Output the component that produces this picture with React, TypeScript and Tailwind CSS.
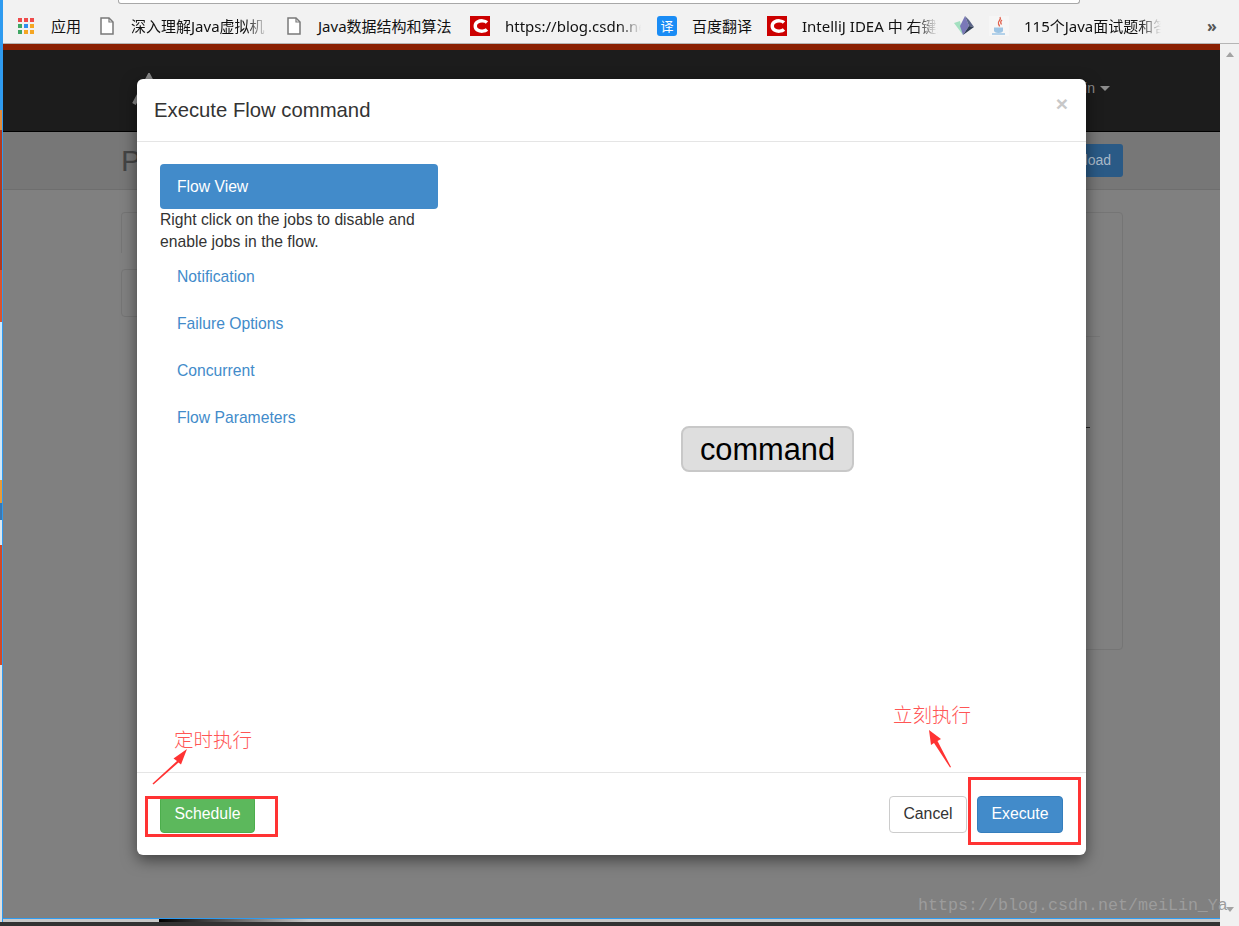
import type { ReactNode } from 'react';

const fadeText = 'overflow-hidden whitespace-nowrap [mask-image:linear-gradient(to_right,black_84%,transparent)]';

function PageIcon() {
  return (
    <svg width="14" height="18" viewBox="0 0 14 18" fill="none">
      <path d="M1 1h8l4 4v12H1z" fill="#fff" stroke="#7a7a7a" strokeWidth="1.5" />
      <path d="M9 1v4h4" stroke="#7a7a7a" strokeWidth="1.2" />
    </svg>
  );
}

function AppsIcon() {
  const colors = ['#ef4b4b', '#ef4b4b', '#ef4b4b', '#3fa764', '#2f8fef', '#f5a623', '#3fa764', '#f5a623', '#f5a623'];
  return (
    <div className="grid grid-cols-3 gap-[2px]">
      {colors.map((c, i) => (
        <div key={i} className="w-[4px] h-[4px]" style={{ backgroundColor: c }} />
      ))}
    </div>
  );
}

function CsdnIcon() {
  return (
    <svg width="20" height="20" viewBox="0 0 20 20">
      <rect width="20" height="20" fill="#cc0000" />
      <path d="M17 6.500C15 4.500 10.500 4.200 7.500 6c-3 1.800-3 6.200 0 8 3 1.800 7.500 1.500 9.500-.5" fill="none" stroke="#fff" strokeWidth="3.400" />
    </svg>
  );
}

function TranslateIcon() {
  return (
    <div className="w-[20px] h-[20px] rounded-[3px] bg-[#1a8cf5] flex items-center justify-center text-white text-[13px] leading-none">
      译
    </div>
  );
}

function PrismIcon() {
  return (
    <svg width="20" height="20" viewBox="0 0 20 20">
      <polygon points="0,7 6,5 9,19" fill="#a3e0c0" />
      <polygon points="11,0 6,10 9,19 15,10" fill="#7a78b8" />
      <polygon points="11,0 15,10 20,11 15,4" fill="#5a6488" />
      <polygon points="9,19 15,10 20,11" fill="#2f3d55" />
    </svg>
  );
}

function JavaIcon() {
  return (
    <svg width="20" height="20" viewBox="0 0 20 20">
      <rect width="20" height="20" fill="#f6f6f6" />
      <path d="M11 1c2 3-3 4-1.500 7 .4 1 1 1.500 1 2.500M13 4c-2 1.500-1.500 3-.5 4.500" fill="none" stroke="#e0604c" strokeWidth="1.300" />
      <path d="M5 11.500h9v3c0 1.500-1.500 2.500-4.500 2.500S5 16 5 14.500z" fill="#9cc4e4" />
      <path d="M3 18h13" stroke="#9cc4e4" strokeWidth="1.500" />
    </svg>
  );
}

function Bookmark({ icon, children, textClass }: { icon: ReactNode; children?: string; textClass?: string }) {
  return (
    <div className="flex items-center gap-[15px]">
      <div className="w-[20px] h-[20px] flex items-center justify-center">{icon}</div>
      {children && <div className={textClass}>{children}</div>}
    </div>
  );
}

function BookmarkBar() {
  return (
    <div className="h-[44px] bg-[#f2f2f2] border-b border-[#b5b5b5] relative">
      <div className="absolute top-0 left-[115px] w-[962px] h-[4px] bg-white border-x border-b border-[#a8a8a8] rounded-b-[3px]" />
      <div className="h-full flex items-center gap-[16px] pl-[13px] pt-[9px] text-[15px] text-[#111] font-['Noto_Sans','Noto_Sans_CJK_SC',sans-serif]">
        <Bookmark icon={<AppsIcon />} textClass="w-[30px] whitespace-nowrap">应用</Bookmark>
        <Bookmark icon={<PageIcon />} textClass={`-ml-[1px] w-[137px] ${fadeText}`}>深入理解Java虚拟机</Bookmark>
        <Bookmark icon={<PageIcon />} textClass="-ml-[1px] w-[136px] whitespace-nowrap">Java数据结构和算法</Bookmark>
        <Bookmark icon={<CsdnIcon />} textClass={`w-[136px] ${fadeText}`}>https://blog.csdn.net/</Bookmark>
        <Bookmark icon={<TranslateIcon />} textClass="w-[59px] whitespace-nowrap">百度翻译</Bookmark>
        <Bookmark icon={<CsdnIcon />} textClass={`w-[136px] ${fadeText}`}>IntelliJ IDEA 中 右键菜单</Bookmark>
        <div className="-mr-[1px]">
          <Bookmark icon={<PrismIcon />} />
        </div>
        <Bookmark icon={<JavaIcon />} textClass={`w-[137px] ${fadeText}`}>115个Java面试题和答案</Bookmark>
        <div className="ml-[30px] text-[#555] text-[16px] leading-none font-bold">»</div>
      </div>
    </div>
  );
}

function DesktopStrip() {
  return (
    <div className="w-[3px] h-full flex flex-col border-r border-[#2f9bf0]">
      <div className="h-[110px] bg-[#2f9bf0]" />
      <div className="h-[20px] bg-[#e08a3c]" />
      <div className="h-[140px] bg-[#b03a20]" />
      <div className="h-[52px] bg-[#d8552f]" />
      <div className="h-[158px] bg-[#cfe6f7]" />
      <div className="h-[23px] bg-[#e69a3a]" />
      <div className="h-[17px] bg-[#3c78b0]" />
      <div className="h-[25px] bg-[#dbe6ee]" />
      <div className="h-[120px] bg-[#d04a28]" />
      <div className="flex-1 bg-[#e0e0e0]" />
    </div>
  );
}

function DimmedPage() {
  return (
    <div className="flex-1 flex flex-col bg-[#808080]">
      <div className="h-[6px] bg-[#8a2003]" />
      <div className="h-[82px] bg-[#1c1c1c] border-b border-black flex items-center justify-between pl-[129px] pr-[110px]">
        <svg width="34" height="34" viewBox="0 0 34 34" fill="none" className="-mt-[2px]">
          <path d="M2 31 17 3l15 28" stroke="#8a8a8a" strokeWidth="4" />
        </svg>
        <div className="flex items-center gap-[5px] text-[14px] text-[#8c8c8c] -mt-[4px]">
          <span>Admin</span>
          <span className="w-0 h-0 border-x-[5px] border-x-transparent border-t-[5px] border-t-[#8c8c8c]" />
        </div>
      </div>
      <div className="h-[58px] bg-[#777777] border-b border-[#6e6e6e] flex items-center justify-between pl-[118px] pr-[97px]">
        <div className="text-[30px] text-[#444]">Project</div>
        <div className="h-[33px] px-[12px] flex items-center rounded-[3px] bg-[#2a5a86] text-[14px] text-[#a9b9c8]">Upload</div>
      </div>
      <div className="flex pl-[118px] pr-[97px] pt-[22px]">
        <div className="w-[320px] flex flex-col">
          <div className="h-[41px] border border-b-0 border-[#757575] rounded-t-[4px]" />
          <div className="h-[48px] mt-[16px] border border-[#757575] rounded-[4px]" />
        </div>
        <div className="flex-1 h-[438px] border border-[#757575] rounded-[4px] flex flex-col items-end">
          <div className="w-[120px] h-px mt-[123px] mr-[22px] bg-[#777]" />
          <div className="w-[36px] h-[10px] mt-[25px] bg-[#2a5a86] mr-[36px] rounded-r-full" />
          <div className="w-[40px] h-px mt-[55px] bg-[#222] mr-[32px]" />
        </div>
      </div>
    </div>
  );
}

const tabs = ['Notification', 'Failure Options', 'Concurrent', 'Flow Parameters'];

function ExecuteModal() {
  return (
    <div className="absolute left-[137px] top-[79px] w-[949px] h-[776px] bg-white rounded-[6px] shadow-[0_5px_15px_rgba(0,0,0,0.5)] flex flex-col">
      <div className="h-[63px] shrink-0 border-b border-[#e5e5e5] flex items-start justify-between pl-[17px] pr-[18px]">
        <div className="text-[20.3px] leading-[22px] mt-[20px] text-[#333]">Execute Flow command</div>
        <div className="text-[21px] leading-[21px] mt-[14px] font-bold text-[#c8c8c8]">×</div>
      </div>

      <div className="flex-1 flex pl-[23px] pr-[23px] pt-[22px]">
        <div className="w-[278px] shrink-0 text-[15.7px] leading-[22px]">
          <div className="h-[45px] rounded-[4px] bg-[#428bca] text-white flex items-center px-[17px]">Flow View</div>
          <p className="text-[#333]">Right click on the jobs to disable and enable jobs in the flow.</p>
          <div className="flex flex-col gap-[2px]">
            {tabs.map((t) => (
              <div key={t} className="h-[45px] pt-[2px] flex items-center px-[17px] text-[#428bca]">{t}</div>
            ))}
          </div>
        </div>
        <div className="flex-1 relative">
          {/* flow graph canvas */}
          <div className="absolute left-[243px] top-[262px] w-[173px] h-[46px] pt-[2px] rounded-[8px] bg-[#dedede] border-2 border-[#c8c8c8] flex items-center justify-center text-[30.8px] text-black">
            command
          </div>
        </div>
      </div>

      <div className="h-[83px] shrink-0 border-t border-[#e5e5e5] flex items-center justify-between px-[23px] text-[15.8px]">
        <div className="h-[37px] w-[95px] rounded-[4px] bg-[#5cb85c] border border-[#4cae4c] text-white flex items-center justify-center">Schedule</div>
        <div className="flex gap-[10px]">
          <div className="h-[37px] w-[78px] rounded-[4px] bg-white border border-[#ccc] text-[#333] flex items-center justify-center">Cancel</div>
          <div className="h-[37px] w-[86px] rounded-[4px] bg-[#428bca] border border-[#357ebd] text-white flex items-center justify-center">Execute</div>
        </div>
      </div>
    </div>
  );
}

function Annotations() {
  return (
    <>
      <div className="absolute left-[145px] top-[796px] w-[133px] h-[41px] border-[3px] border-[#ff3333]" />
      <div className="absolute left-[968px] top-[777px] w-[113px] h-[68px] border-[3px] border-[#ff3333]" />
      <div className="absolute left-[174px] top-[725px] text-[19.5px] leading-[28px] text-[#ff5555] font-['Noto_Sans_CJK_SC',sans-serif] font-light">定时执行</div>
      <div className="absolute left-[893px] top-[700px] text-[19.5px] leading-[28px] text-[#ff5555] font-['Noto_Sans_CJK_SC',sans-serif] font-light">立刻执行</div>
      <svg className="absolute left-[148px] top-[745px]" width="44" height="42" viewBox="0 0 44 42">
        <polygon points="4.500,38.500 29,16 25.500,13.500 39,4 33,19.500 30.500,17.500 5.500,39.500" fill="#ff3333" />
      </svg>
      <svg className="absolute left-[925px] top-[726px]" width="30" height="44" viewBox="0 0 30 44">
        <polygon points="4,4 16,13 12.500,15 26,41 25,41.500 9,17 6,19" fill="#ff3333" />
      </svg>
      <div className="absolute left-[918px] top-[896px] text-[16.67px] leading-[20px] whitespace-nowrap text-[#9c9c9c] font-['Liberation_Mono',monospace]">https://blog.csdn.net/meiLin_Ya</div>
    </>
  );
}

export default function App() {
  return (
    <div className="relative w-[1239px] h-[926px] overflow-hidden flex flex-col bg-[#f0f0f0] font-['Liberation_Sans',sans-serif]">
      <div className="h-[922px] flex">
        <DesktopStrip />
        <div className="flex-1 flex flex-col">
          <BookmarkBar />
          <div className="flex-1 flex">
            <div className="flex-1 flex flex-col">
              <DimmedPage />
              <div className="h-[1px] bg-[#2f9bf0]" />
              <div className="h-[3px] bg-[#c8c8c8]">
                <div className="ml-[156px] w-[150px] h-full bg-gradient-to-r from-black to-transparent" />
              </div>
            </div>
            {/* scrollbar */}
            <div className="w-[19px] flex flex-col items-center justify-between pt-[8px] -mb-[4px] pb-[14px] bg-[#f1f1f1]">
              <div className="w-0 h-0 border-x-[4px] border-x-transparent border-b-[5px] border-b-[#a3a3a3]" />
              <div className="w-0 h-0 border-x-[4px] border-x-transparent border-t-[5px] border-t-[#a3a3a3]" />
            </div>
          </div>
        </div>
      </div>
      <div className="h-[4px] w-[1220px] bg-[#333]" />
      <ExecuteModal />
      <Annotations />
    </div>
  );
}
